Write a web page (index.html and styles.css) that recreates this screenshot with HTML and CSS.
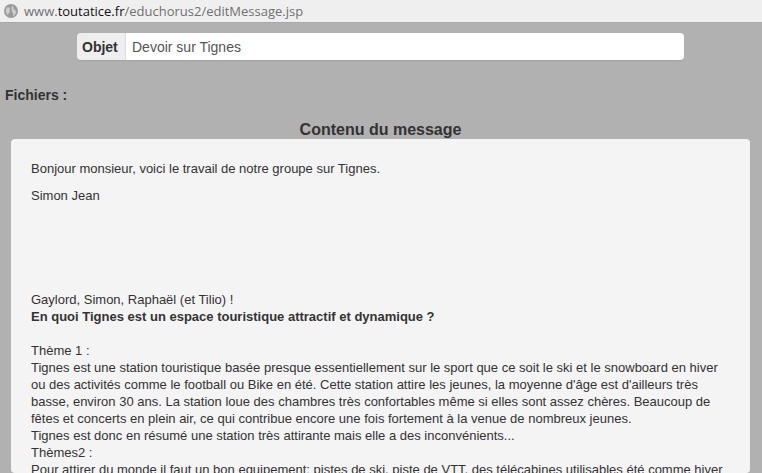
FILE: index.html
```html
<!DOCTYPE html>
<html lang="fr">
<head>
<meta charset="utf-8">
<title>editMessage</title>
<link rel="stylesheet" href="styles.css">
</head>
<body>
<div class="urlbar">
  <svg class="globe" width="14" height="14" viewBox="0 0 14 14">
    <circle cx="7" cy="7" r="7" fill="#9a9a9a"/>
    <path d="M3 3.5 Q5 2.5 6 4.5 Q5 6.5 6 8 Q4 9 4 11.5 Q1.8 9.5 1.6 7 Q1.8 5 3 3.5Z M8 1.5 Q10.5 2.5 9.2 4.8 Q11 6 12.4 7.8 Q11.5 11 9 12.4 Q10 9.2 8 8 Q7 6 8 1.5Z" fill="#cdcdcd"/>
  </svg>
  <span class="url">www.<span class="host">toutatice.fr</span>/educhorus2/editMessage.jsp</span>
</div>
<div class="page">
  <div class="objet-group">
    <span class="objet-label">Objet</span>
    <span class="objet-input">Devoir sur Tignes</span>
  </div>
  <div class="fichiers">Fichiers :</div>
  <h2 class="contenu-title">Contenu du message</h2>
  <div class="panel">
    <p>Bonjour monsieur, voici le travail de notre groupe sur Tignes.</p>
    <p>Simon Jean</p>
    <div class="spacer"></div>
    <div class="body">
      Gaylord, Simon, Raphaël (et Tilio) !<br>
      <b>En quoi Tignes est un espace touristique attractif et dynamique ?</b><br>
      <br>
      Thème 1 :<br>
      Tignes est une station touristique basée presque essentiellement sur le sport que ce soit le ski et le snowboard en hiver<br>
      ou des activités comme le football ou Bike en été. Cette station attire les jeunes, la moyenne d'âge est d'ailleurs très<br>
      basse, environ 30 ans. La station loue des chambres très confortables même si elles sont assez chères. Beaucoup de<br>
      fêtes et concerts en plein air, ce qui contribue encore une fois fortement à la venue de nombreux jeunes.<br>
      Tignes est donc en résumé une station très attirante mais elle a des inconvénients...<br>
      Thèmes2 :<br>
      Pour attirer du monde il faut un bon equipement: pistes de ski, piste de VTT, des télécabines utilisables été comme hiver
    </div>
  </div>
</div>
</body>
</html>
```
FILE: styles.css
```css
html, body {
  margin: 0;
  padding: 0;
  height: 100%;
  overflow: hidden;
}
body {
  background: #b1b1b1;
  font-family: "Liberation Sans", Arial, sans-serif;
  color: #333;
}
.urlbar {
  height: 22px;
  background: #efefef;
  border-bottom: 1px solid #a3aaae;
  display: flex;
  align-items: center;
  padding-left: 4px;
  gap: 6px;
}
.globe { flex: none; }
.url {
  font-family: "Open Sans", "DejaVu Sans", sans-serif;
  font-size: 13px;
  color: #707070;
  white-space: nowrap;
}
.host { color: #111; }
.page {
  background: #b1b1b1;
  padding-top: 10px;
}
.objet-group {
  margin-left: 77px;
  width: 607px;
  height: 27px;
  display: flex;
  border-radius: 4px;
  overflow: hidden;
  box-shadow: 0 1px 1px rgba(0,0,0,0.08);
}
.objet-label {
  background: #eeeeee;
  font-weight: bold;
  font-size: 14px;
  color: #333;
  padding: 0 5px 0 5px;
  display: flex;
  align-items: center;
  border-right: 1px solid #ddd;
  width: 38px;
}
.objet-input {
  flex: 1;
  background: #fff;
  font-size: 14px;
  color: #555;
  display: flex;
  align-items: center;
  padding-left: 6px;
}
.fichiers {
  margin: 27px 0 0 5px;
  font-size: 14px;
  font-weight: bold;
  line-height: 17px;
}
.contenu-title {
  margin: 17px 0 0 0;
  width: 761px;
  text-align: center;
  font-size: 16px;
  font-weight: bold;
  line-height: 18px;
}
.panel {
  margin: 0 12px 0 11px;
  background: #f4f4f4;
  border-radius: 4px;
  padding: 11px 20px 0 20px;
  font-size: 13px;
  line-height: 17px;
  height: 323px;
  overflow: hidden;
  color: #333;
}
.panel p {
  margin: 10px 0 0 0;
}
.spacer { height: 87px; }
.body {
  white-space: nowrap;
}
```
